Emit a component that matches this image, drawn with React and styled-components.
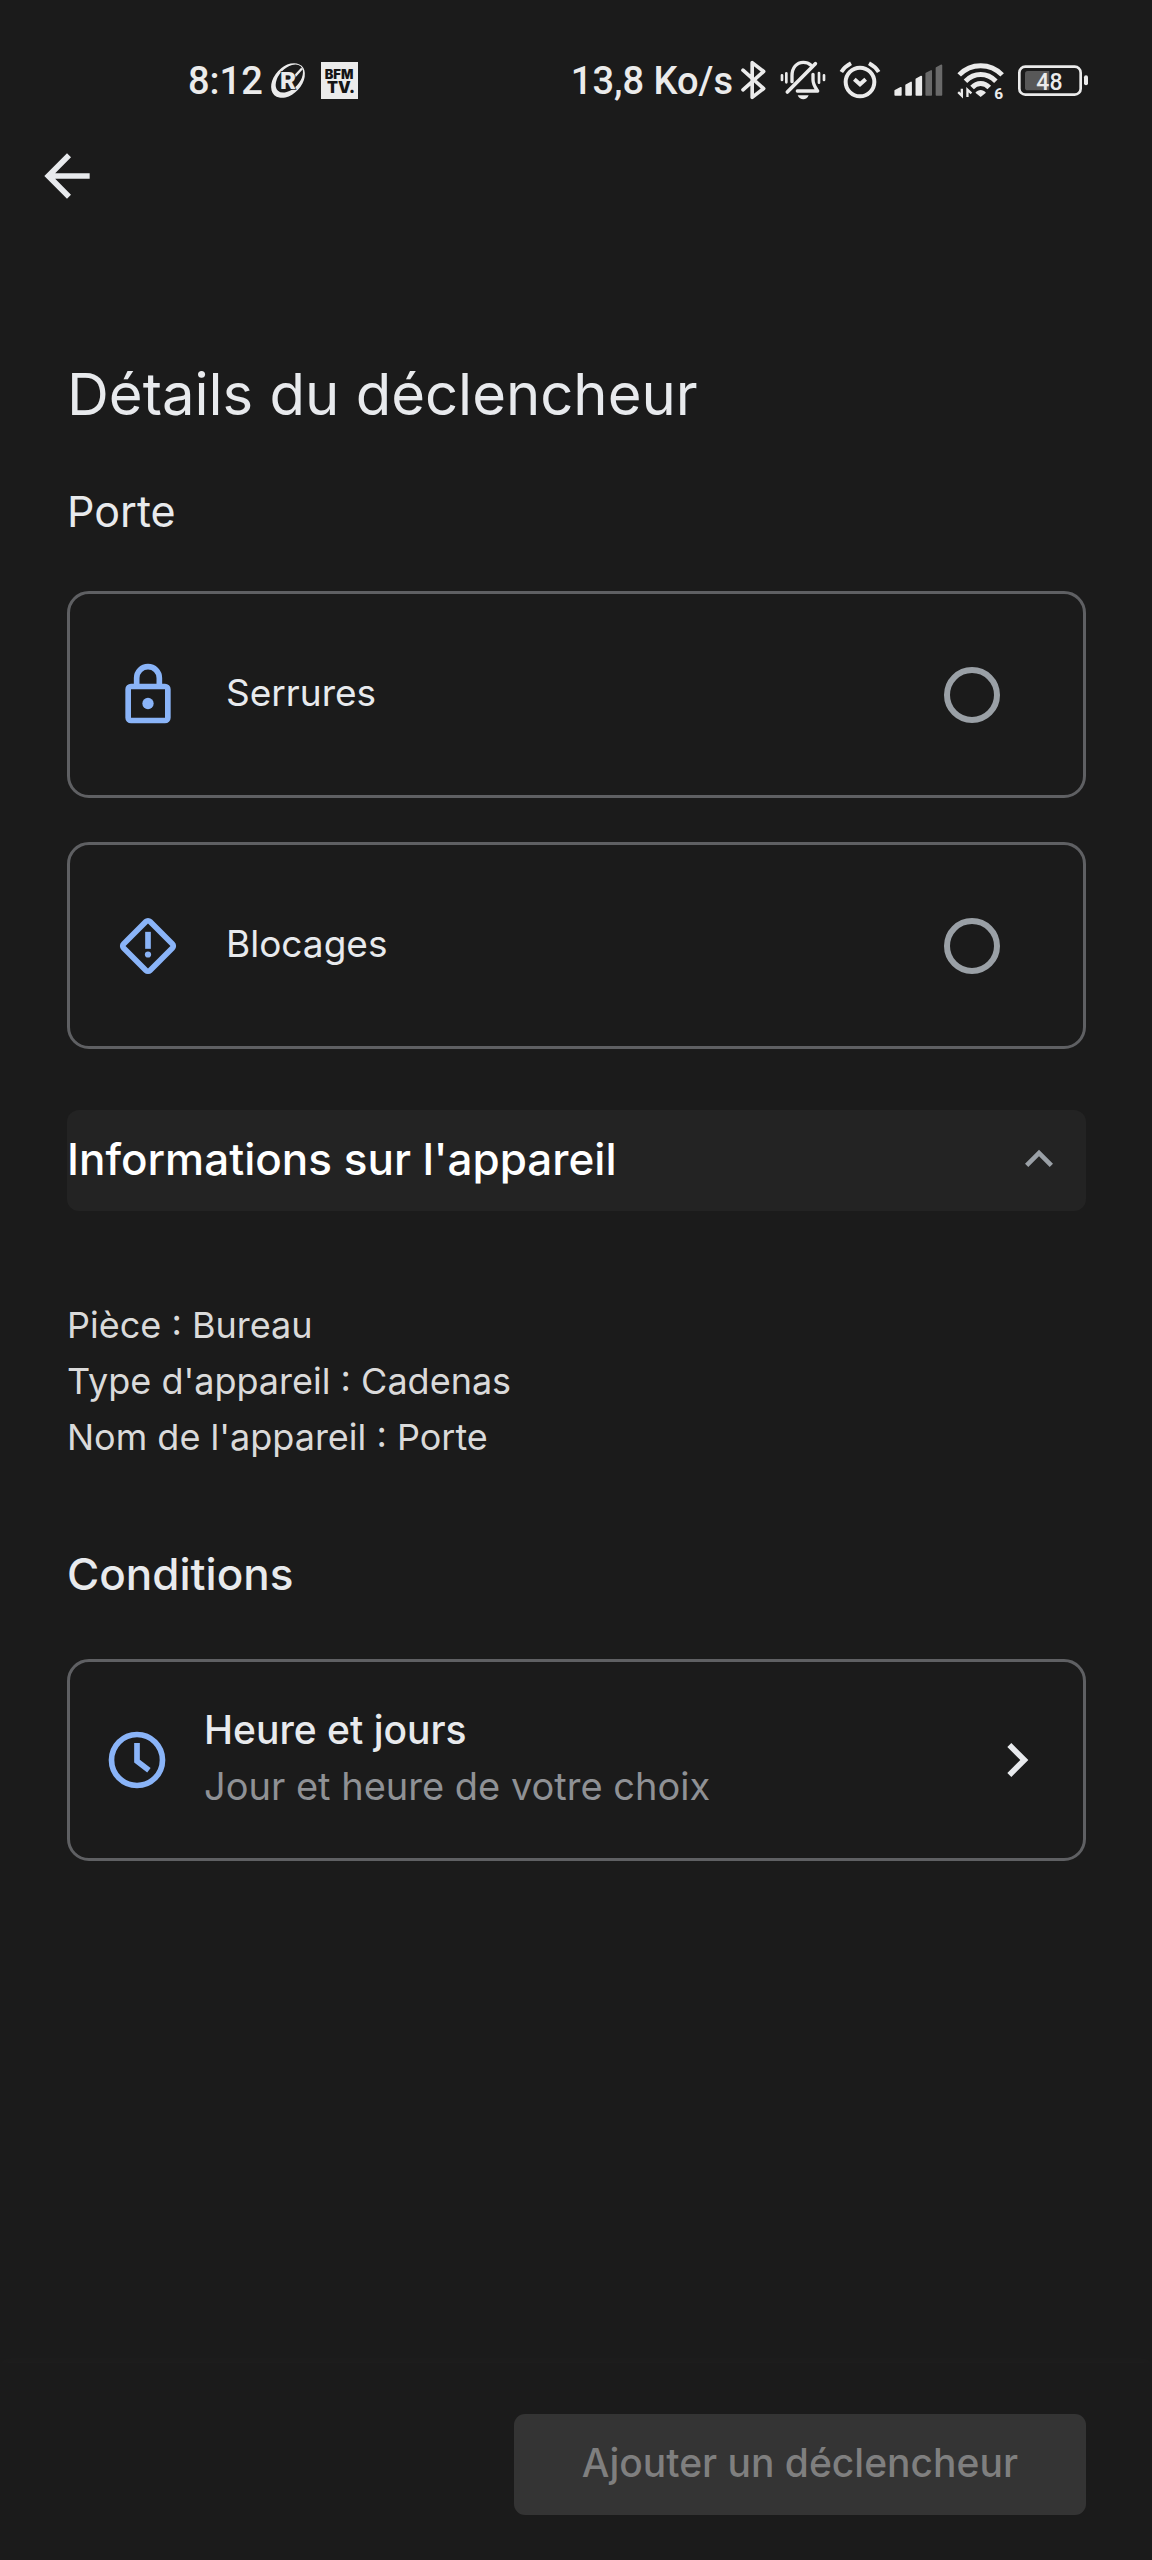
import React, { useState } from "react";
import styled, { ThemeProvider, createGlobalStyle } from "styled-components";

const theme = {
  bg: "#1b1b1b",
  surface: "#232323",
  disabled: "#343434",
  disabledText: "#7f7f7f",
  text: "#e8eaed",
  textStrong: "#ffffff",
  textSoft: "#dadada",
  muted: "#8f9195",
  control: "#9aa0a6",
  border: "#5f6063",
  accent: "#8ab4f8",
};

const GlobalStyles = createGlobalStyle`
  * {
    box-sizing: border-box;
  }
  body {
    margin: 0;
    background-color: ${theme.bg};
    color: ${theme.text};
    font-family: Inter, "Liberation Sans", sans-serif;
  }
  button {
    font-family: inherit;
    color: inherit;
    border: none;
    background: none;
    padding: 0;
    text-align: left;
  }
  svg {
    display: block;
    flex-shrink: 0;
    overflow: visible;
  }
`;

const PageStyles = styled.div`
  min-height: 100vh;
  display: flex;
  flex-direction: column;
`;

const StatusBarStyles = styled.div`
  display: flex;
  justify-content: space-between;
  align-items: center;
  height: 48px;
  margin-top: 56px;
  padding: 0 63px 0 188px;
  font-family: Roboto, sans-serif;
  font-size: 38px;
  font-weight: 500;
  color: #ebebeb;
`;

const StatusGroup = styled.div`
  display: flex;
  align-items: center;
  gap: ${(props) => props.$gap}px;
`;

const StatusText = styled.span`
  line-height: 44px;
  padding-top: 2px;
  white-space: nowrap;
`;

const AppBar = styled.header`
  padding: 38px 33px 0;
`;

const BackButton = styled.button`
  display: block;
`;

const Main = styled.main`
  padding: 148px 66px 60px 67px;
`;

const Title = styled.h1`
  margin: 0 0 53px;
  font-size: 58px;
  line-height: 72px;
  font-weight: 400;
`;

const Subtitle = styled.h2`
  margin: 0;
  font-size: ${(props) => (props.$strong ? 44 : 43)}px;
  line-height: 56px;
  font-weight: ${(props) => (props.$strong ? 500 : 400)};
`;

const OptionList = styled.div`
  display: flex;
  flex-direction: column;
  gap: 44px;
  margin: 52px 0 61px;
`;

const OptionCard = styled.label`
  display: flex;
  align-items: center;
  gap: 44px;
  min-height: 207px;
  padding: 0 83px 0 44px;
  border: 3px solid ${(props) => props.theme.border};
  border-radius: 22px;
`;

const OptionLabel = styled.span`
  flex: 1;
  padding-bottom: 4px;
  font-size: 37px;
  line-height: 56px;
`;

const Radio = styled.input`
  appearance: none;
  width: 56px;
  height: 56px;
  margin: 0;
  border: 6px solid ${(props) => props.theme.control};
  border-radius: 50%;
  &:checked {
    border-color: ${(props) => props.theme.accent};
    background: radial-gradient(
      ${(props) => props.theme.accent} 50%,
      transparent 52%
    );
  }
`;

const InfoToggle = styled.button`
  display: flex;
  justify-content: space-between;
  align-items: center;
  width: 100%;
  padding: 21px 19px 24px 0;
  border-radius: 12px;
  background-color: ${(props) => props.theme.surface};
  color: ${(props) => props.theme.textStrong};
  font-size: 44px;
  line-height: 56px;
  font-weight: 500;
`;

const InfoList = styled.ul`
  list-style: none;
  margin: 86px 0 0;
  padding: 0;
  font-size: 36px;
  line-height: 56px;
  color: ${(props) => props.theme.textSoft};
`;

const Section = styled.section`
  margin-top: 81px;
`;

const ConditionCard = styled.button`
  display: flex;
  align-items: center;
  width: 100%;
  min-height: 202px;
  margin-top: 57px;
  padding: 0 32px 0 33px;
  border: 3px solid ${(props) => props.theme.border};
  border-radius: 22px;
`;

const ConditionText = styled.span`
  flex: 1;
  display: flex;
  flex-direction: column;
  padding: 0 33px 4px;
  line-height: 56px;
  .name {
    font-size: 39px;
    font-weight: 500;
  }
  .desc {
    font-size: 38px;
    color: ${(props) => props.theme.muted};
  }
`;

const Footer = styled.footer`
  display: flex;
  justify-content: flex-end;
  margin-top: auto;
  padding: 51px 66px 45px;
  box-shadow: 0 -3px 12px rgba(255, 255, 255, 0.02);
`;

const SubmitButton = styled.button`
  padding: 21px 68px 24px;
  border-radius: 11px;
  background-color: ${(props) => props.theme.disabled};
  color: ${(props) => props.theme.disabledText};
  font-size: 39px;
  line-height: 56px;
  font-weight: 500;
`;

const Icon = ({ size = 68, color = theme.text, children }) => (
  <svg width={size} height={size} viewBox="0 0 24 24" fill={color} aria-hidden="true">
    {children}
  </svg>
);

const LockIcon = () => (
  <Icon color="none">
    <g stroke={theme.accent} strokeWidth="2">
      <rect x="5" y="9" width="14" height="12" rx="1" />
      <path d="M8 9V6a4 4 0 0 1 8 0v3" />
    </g>
    <circle cx="12" cy="15" r="2" fill={theme.accent} />
  </Icon>
);

const JamIcon = () => (
  <Icon color={theme.accent}>
    <rect
      x="5.4"
      y="5.4"
      width="13.2"
      height="13.2"
      rx="1"
      fill="none"
      stroke={theme.accent}
      strokeWidth="2"
      transform="rotate(45 12 12)"
    />
    <path d="M11 7h2v6h-2z" />
    <circle cx="12" cy="15" r="1.1" />
  </Icon>
);

const ClockIcon = () => (
  <Icon color={theme.accent}>
    <circle cx="12" cy="12" r="9" fill="none" stroke={theme.accent} strokeWidth="2" />
    <path d="M15.6 16.4l1.2-1.6-3.8-2.9V6h-2v6.9z" />
  </Icon>
);

const RugbyIcon = () => (
  <svg width="34" height="35" viewBox="303 68 102 104" aria-hidden="true">
    <ellipse cx="354" cy="120" rx="60" ry="41" fill="#ebebeb" transform="rotate(-47 354 120)" />
    <ellipse cx="358" cy="114" rx="50" ry="31" fill={theme.bg} transform="rotate(-47 358 114)" />
    <path d="M370 112L396 84" stroke="#ebebeb" strokeWidth="7" />
    <text
      x="330"
      y="146"
      fontFamily="Roboto, sans-serif"
      fontSize="74"
      fontWeight="900"
      fill="#ebebeb"
      stroke={theme.bg}
      strokeWidth="4"
      paintOrder="stroke"
    >
      R
    </text>
  </svg>
);

const NewsIcon = () => (
  <svg width="37" height="37" viewBox="0 0 37 37" aria-hidden="true">
    <rect width="37" height="37" fill="#ebebeb" />
    <g fontFamily="Inter, sans-serif" fontWeight="900" fill="#151515" textAnchor="middle">
      <text x="18" y="17" fontSize="13">BFM</text>
      <text x="20" y="31" fontSize="16">TV.</text>
    </g>
  </svg>
);

const BluetoothIcon = () => (
  <svg width="25" height="40" viewBox="543 58 76 120" aria-hidden="true">
    <path
      d="M549 88l63 56-35 27V65l35 27-63 56"
      fill="none"
      stroke="#ebebeb"
      strokeWidth="11"
      strokeLinecap="round"
      strokeLinejoin="round"
    />
  </svg>
);

const MutedBellIcon = () => (
  <svg width="46" height="40" viewBox="18 15 138 120" aria-hidden="true">
    <g fill="none" stroke="#ebebeb" strokeWidth="10" strokeLinecap="round" strokeLinejoin="round">
      <path d="M24 61v14M37 55v27M135 54v29M150 61v14" strokeWidth="8" />
      <path d="M54 80V62c0-24 14-40 34-40 9 0 17 3 22 8" />
      <path d="M117 58v16c0 14 5 20 14 34H70" />
      <path d="M40 111L124 26" strokeWidth="11" />
    </g>
    <path d="M71 121h33c-3 8-9 12-16 12s-14-4-17-12z" fill="#ebebeb" />
  </svg>
);

const AlarmIcon = () => (
  <svg width="40" height="38" viewBox="33 60 120 114" aria-hidden="true">
    <g fill="none" stroke="#ebebeb" strokeWidth="12">
      <circle cx="93" cy="123" r="43" />
      <path d="M76 115l17 15 17-15" />
      <path d="M37 93c7-11 16-19 29-26M149 93c-7-11-16-19-29-26" />
    </g>
  </svg>
);

const SignalIcon = () => (
  <svg width="49" height="32" viewBox="193 72 147 97" aria-hidden="true">
    <g fill="#ebebeb" stroke="#ebebeb" strokeWidth="5" strokeLinejoin="round">
      <path d="M196 153l17-9v22h-17z" />
      <path d="M229 136l15-8v38h-15z" />
      <path d="M260 118l15-8v56h-15z" />
    </g>
    <g fill="#6a6a6a" stroke="#6a6a6a" strokeWidth="5" strokeLinejoin="round">
      <path d="M290 101l15-8v73h-15z" />
      <path d="M321 84l15-8v90h-15z" />
    </g>
  </svg>
);

const WifiIcon = () => (
  <svg width="47" height="37" viewBox="376 66 141 112" aria-hidden="true">
    <g fill="none" stroke="#ebebeb" strokeWidth="15">
      <path d="M382 105c36-37 94-37 130 0" />
      <path d="M401 124c27-27 65-27 92 0" />
      <path d="M421 143c15-16 37-16 52 0" />
    </g>
    <path d="M431 159c9-11 23-11 32 0l-16 13z" fill="#ebebeb" />
    <path
      d="M379 157l11 11v-21M419 161l-12-11v22"
      fill="none"
      stroke="#ebebeb"
      strokeWidth="7"
    />
    <text x="488" y="177" fontFamily="Roboto, sans-serif" fontSize="47" fontWeight="700" fill="#ebebeb">
      6
    </text>
  </svg>
);

const BatteryIcon = () => (
  <svg width="71" height="31" viewBox="563 72 213 93" aria-label="48 %">
    <rect x="567" y="77" width="184" height="84" rx="18" fill="none" stroke="#ebebeb" strokeWidth="8" />
    <rect x="761" y="103" width="12" height="30" rx="6" fill="#ebebeb" />
    <path d="M592 90h65v58h-65q-8 0-8-8V98q0-8 8-8z" fill="#585858" />
    <text x="618" y="147" fontFamily="Roboto, sans-serif" fontSize="69" fontWeight="500" fill="#ebebeb">
      48
    </text>
  </svg>
);

const StatusBar = () => (
  <StatusBarStyles>
    <StatusGroup $gap={16}>
      <StatusGroup $gap={8}>
        <StatusText>8:12</StatusText>
        <RugbyIcon />
      </StatusGroup>
      <NewsIcon />
    </StatusGroup>
    <StatusGroup $gap={8}>
      <StatusText>13,8 Ko/s</StatusText>
      <StatusGroup $gap={14}>
        <BluetoothIcon />
        <MutedBellIcon />
        <AlarmIcon />
        <SignalIcon />
        <WifiIcon />
        <BatteryIcon />
      </StatusGroup>
    </StatusGroup>
  </StatusBarStyles>
);

const options = [
  { id: "locks", label: "Serrures", icon: <LockIcon /> },
  { id: "jams", label: "Blocages", icon: <JamIcon /> },
];

const App = () => {
  const [selected, setSelected] = useState(null);
  const [open, setOpen] = useState(true);

  return (
    <ThemeProvider theme={theme}>
      <GlobalStyles />
      <PageStyles>
        <StatusBar />
        <AppBar>
          <BackButton type="button" aria-label="Retour">
            <Icon>
              <path d="M20 11H7.83l5.59-5.59L12 4l-8 8 8 8 1.41-1.41L7.83 13H20v-2z" />
            </Icon>
          </BackButton>
        </AppBar>
        <Main>
          <Title>Détails du déclencheur</Title>
          <Subtitle>Porte</Subtitle>
          <OptionList>
            {options.map((item) => (
              <OptionCard key={item.id} htmlFor={item.id}>
                {item.icon}
                <OptionLabel>{item.label}</OptionLabel>
                <Radio
                  type="radio"
                  name="trigger"
                  id={item.id}
                  checked={selected === item.id}
                  onChange={() => setSelected(item.id)}
                />
              </OptionCard>
            ))}
          </OptionList>
          <InfoToggle type="button" aria-expanded={open} onClick={() => setOpen(!open)}>
            Informations sur l'appareil
            <Icon size={56} color={theme.control}>
              {open ? (
                <path d="M12 8l-6 6 1.41 1.41L12 10.83l4.59 4.58L18 14z" />
              ) : (
                <path d="M12 16l-6-6 1.41-1.41L12 13.17l4.59-4.58L18 10z" />
              )}
            </Icon>
          </InfoToggle>
          {open && (
            <InfoList>
              <li>Pièce : Bureau</li>
              <li>Type d'appareil : Cadenas</li>
              <li>Nom de l'appareil : Porte</li>
            </InfoList>
          )}
          <Section>
            <Subtitle $strong>Conditions</Subtitle>
            <ConditionCard type="button">
              <ClockIcon />
              <ConditionText>
                <span className="name">Heure et jours</span>
                <span className="desc">Jour et heure de votre choix</span>
              </ConditionText>
              <Icon>
                <path d="M10 6L8.59 7.41 13.17 12l-4.58 4.59L10 18l6-6z" />
              </Icon>
            </ConditionCard>
          </Section>
        </Main>
        <Footer>
          <SubmitButton type="button" disabled={!selected}>
            Ajouter un déclencheur
          </SubmitButton>
        </Footer>
      </PageStyles>
    </ThemeProvider>
  );
};

export default App;
